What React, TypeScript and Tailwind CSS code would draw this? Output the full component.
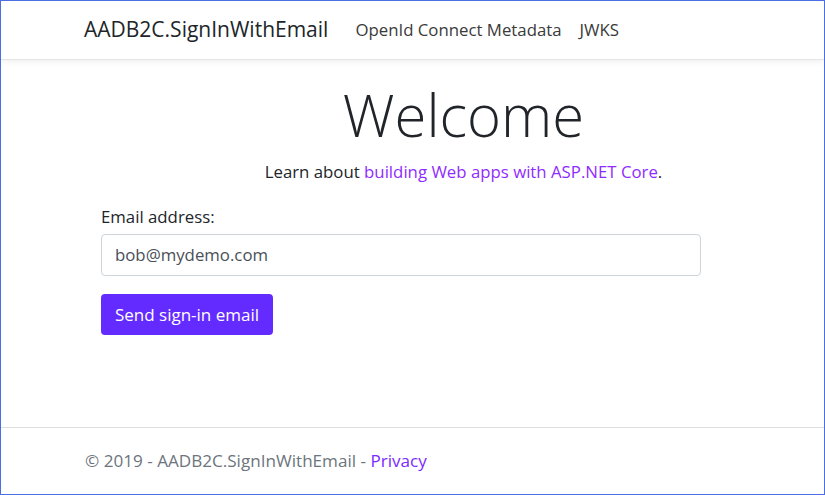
import React from 'react';

const App: React.FC = () => {
    return (
        <div
            className="w-[825px] h-[495px] border border-[#4a6fe3] bg-white flex flex-col text-[#212529] overflow-hidden"
            style={{ fontFamily: '"Open Sans", "Noto Sans", sans-serif' }}
        >
            <header className="h-[59px] shrink-0 border-b border-[#e5e5e5] shadow-[0_2px_6px_rgba(0,0,0,0.06)] flex items-center pl-[83px] pb-[1px]">
                <span className="text-[21px] text-[#212529]">AADB2C.SignInWithEmail</span>
                <nav className="flex items-center gap-[18px] ml-[27px] text-[16.8px] text-[#3a3a3a]">
                    <span>OpenId Connect Metadata</span>
                    <span>JWKS</span>
                </nav>
            </header>

            <main className="flex-1 flex flex-col pl-[100px] pr-[124px]">
                <div className="flex flex-col items-center pl-[126px] pt-[20px]">
                    <h1 className="text-[58px] leading-[69px] font-light text-[#212529]">Welcome</h1>
                    <p className="mt-[11px] text-[16.8px] leading-[24px]">
                        Learn about <span className="text-[#8f2bff]">building Web apps with ASP.NET Core</span>.
                    </p>
                </div>

                <div className="mt-[21px] flex flex-col">
                    <label className="text-[16.8px] leading-[24px]">Email address:</label>
                    <div className="mt-[5px] h-[42px] w-[600px] border border-[#ced4da] rounded-[4px] flex items-center px-[13px] text-[16.8px] text-[#495057]">
                        bob@mydemo.com
                    </div>
                    <button className="mt-[18px] self-start h-[41px] w-[172px] rounded-[4px] bg-[#632bff] text-white text-[17px] flex items-center justify-center">
                        Send sign-in email
                    </button>
                </div>
            </main>

            <footer className="h-[67px] shrink-0 border-t border-[#dedede] flex items-center pl-[84px] text-[17.1px] text-[#6c757d]">
                <span>
                    © 2019 - AADB2C.SignInWithEmail - <span className="text-[#7a2bff]">Privacy</span>
                </span>
            </footer>
        </div>
    );
};

export default App;
